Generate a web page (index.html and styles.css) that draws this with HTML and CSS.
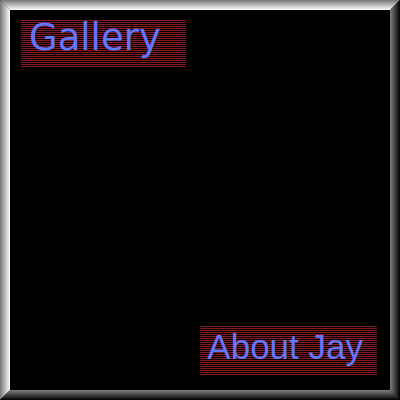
FILE: index.html
```
<!DOCTYPE html>
<html lang="en">
<head>
<meta charset="utf-8">
<meta name="viewport" content="width=device-width, initial-scale=1">
<title>Gallery</title>
<link rel="stylesheet" href="styles.css">
</head>
<body>
<div class="edge edge-top"></div>
<div class="edge edge-left"></div>
<div class="edge edge-right"></div>
<div class="edge edge-bottom"></div>
<nav class="menu">
<a class="plate plate-gallery" href="#gallery">Gallery</a>
<a class="plate plate-about" href="#about">About Jay</a>
</nav>
</body>
</html>
```
FILE: styles.css
```
* {
  box-sizing: border-box;
}

body {
  margin: 0;
  background: #000;
  font-family: "Liberation Sans", Arial, sans-serif;
}

.menu {
  display: flex;
  flex-direction: column;
  justify-content: space-between;
  min-height: 100vh;
  padding: 20px 23px 25px 21px;
}

.plate {
  color: #6276ff;
  text-decoration: none;
  white-space: nowrap;
  background: repeating-linear-gradient(#841a1e 0 1px, #000 1px 2px);
}

.plate-gallery {
  align-self: flex-start;
  padding: 0 25px 11px 8px;
  font-family: "DejaVu Sans", Verdana, sans-serif;
  font-size: 37px;
  line-height: 36px;
}

.plate-about {
  align-self: flex-end;
  padding: 0 14px 7px 7px;
  font-size: 35px;
  line-height: 42px;
}

/* Bevelled frame, lit from the top left */
.edge {
  position: fixed;
}

.edge-top {
  inset: 0 0 auto 0;
  height: 10px;
  background: linear-gradient(#777, #fff);
  clip-path: polygon(0 0, 100% 0, calc(100% - 10px) 100%, 10px 100%);
}

.edge-left {
  inset: 0 auto 0 0;
  width: 10px;
  background: linear-gradient(to right, #777, #fff);
  clip-path: polygon(0 0, 100% 10px, 100% calc(100% - 10px), 0 100%);
}

.edge-right {
  inset: 0 0 0 auto;
  width: 10px;
  background: linear-gradient(to left, #000, #808080);
  clip-path: polygon(100% 0, 0 10px, 0 calc(100% - 10px), 100% 100%);
}

.edge-bottom {
  inset: auto 0 0 0;
  height: 10px;
  background: linear-gradient(#808080, #000);
  clip-path: polygon(0 100%, 100% 100%, calc(100% - 10px) 0, 10px 0);
}
```
